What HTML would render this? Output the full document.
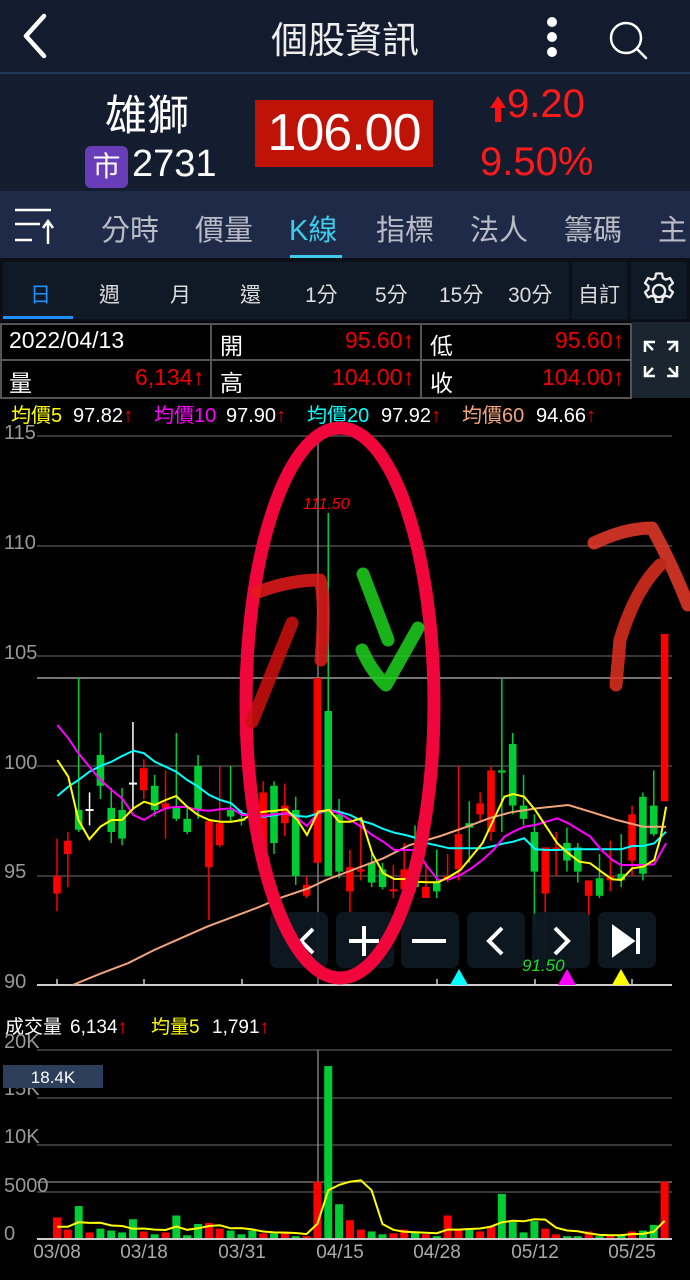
<!DOCTYPE html>
<html><head><meta charset="utf-8">
<style>
*{margin:0;padding:0;box-sizing:border-box}
body{width:690px;height:1280px;background:#000;font-family:"Liberation Sans","Noto Sans CJK TC",sans-serif;position:relative;overflow:hidden;color:#fff}
.a{position:absolute;white-space:nowrap}
.r{color:#e00}
.lg span{display:inline-block}
</style></head><body>
<!-- header -->
<div class="a" style="left:0;top:0;width:690px;height:72px;background:#131c2e"></div>
<svg class="a" style="left:0;top:0" width="690" height="72">
<path d="M44 16 L26 36 L44 56" stroke="#fff" stroke-width="4.5" fill="none" stroke-linecap="round" stroke-linejoin="round"/>
<circle cx="552" cy="22" r="5" fill="#fff"/><circle cx="552" cy="37" r="5" fill="#fff"/><circle cx="552" cy="52" r="5" fill="#fff"/>
<circle cx="626" cy="38" r="15" stroke="#fff" stroke-width="2.5" fill="none"/>
<path d="M637 49 L646 58" stroke="#fff" stroke-width="2.5" stroke-linecap="round"/>
</svg>
<div class="a" style="left:0;width:690px;top:10px;text-align:center;font-size:37px;color:#eee">個股資訊</div>
<div class="a" style="left:0;top:72px;width:690px;height:2px;background:#1d3a58"></div>
<div class="a" style="left:0;top:74px;width:690px;height:117px;background:#141d30"></div>
<div class="a" style="left:105px;top:82px;font-size:42px;color:#fff">雄獅</div>
<div class="a" style="left:85px;top:146px;width:43px;height:42px;background:#6a3db8;border-radius:6px;font-size:28px;text-align:center;line-height:42px">市</div>
<div class="a" style="left:132px;top:143px;font-size:38px">2731</div>
<div class="a" style="left:255px;top:100px;width:178px;height:67px;background:#bf1308"></div>
<div class="a" style="left:255px;top:103px;width:178px;text-align:center;font-size:52px;letter-spacing:-1px">106.00</div>
<svg class="a" style="left:488px;top:94px" width="20" height="30"><path d="M10 2 L18 14 L13 14 L13 28 L7 28 L7 14 L2 14Z" fill="#ff1010"/></svg>
<div class="a" style="left:507px;top:82px;font-size:40px;color:#ff1a1a">9.20</div>
<div class="a" style="left:480px;top:140px;font-size:40px;color:#ff1a1a">9.50%</div>
<!-- tabs -->
<div class="a" style="left:0;top:191px;width:690px;height:67px;background:#1e2a47"></div>
<svg class="a" style="left:0;top:190px" width="60" height="70"><path d="M15 20H51M15 34H40M15 50H32" stroke="#fff" stroke-width="2.5"/><path d="M48 54V32M43 38L48 31L53 38" stroke="#fff" stroke-width="2.5" fill="none"/></svg>
<div class="a" style="left:101px;top:207px;font-size:29px;color:#b9bcc6">分時</div>
<div class="a" style="left:195px;top:207px;font-size:29px;color:#b9bcc6">價量</div>
<div class="a" style="left:289px;top:207px;font-size:29px;color:#3fcbe9">K線</div>
<div class="a" style="left:376px;top:207px;font-size:29px;color:#b9bcc6">指標</div>
<div class="a" style="left:470px;top:207px;font-size:29px;color:#b9bcc6">法人</div>
<div class="a" style="left:564px;top:207px;font-size:29px;color:#b9bcc6">籌碼</div>
<div class="a" style="left:658px;top:207px;font-size:29px;color:#b9bcc6">主</div>
<div class="a" style="left:290px;top:255px;width:52px;height:3px;background:#3fcbe9"></div>
<div class="a" style="left:0;top:258px;width:690px;height:64px;background:#0b1018"></div>
<div class="a" style="left:3px;top:262px;width:566px;height:57px;background:#101a27"></div>
<div class="a" style="left:572px;top:262px;width:55px;height:57px;background:#101a27"></div>
<div class="a" style="left:631px;top:262px;width:56px;height:57px;background:#101a27"></div>
<div class="a" style="left:3px;top:316px;width:70px;height:3px;background:#1e90ff"></div>
<div class="a" style="left:30px;top:279px;font-size:21px;color:#1e90ff">日</div>
<div class="a" style="left:99px;top:279px;font-size:21px;color:#ddd">週</div>
<div class="a" style="left:170px;top:279px;font-size:21px;color:#ddd">月</div>
<div class="a" style="left:240px;top:279px;font-size:21px;color:#ddd">還</div>
<div class="a" style="left:305px;top:279px;font-size:21px;color:#ddd">1分</div>
<div class="a" style="left:375px;top:279px;font-size:21px;color:#ddd">5分</div>
<div class="a" style="left:439px;top:279px;font-size:21px;color:#ddd">15分</div>
<div class="a" style="left:508px;top:279px;font-size:21px;color:#ddd">30分</div>
<div class="a" style="left:578px;top:279px;font-size:21px;color:#ddd">自訂</div>
<svg class="a" style="left:638px;top:270px" width="42" height="42" viewBox="0 0 24 24"><path d="M12 8.5a3.5 3.5 0 1 0 0 7a3.5 3.5 0 1 0 0-7z M10.3 2h3.4l.5 2.6 1.6.9 2.5-.9 1.7 2.9-2 1.7v1.8l2 1.7-1.7 2.9-2.5-.9-1.6.9-.5 2.6h-3.4l-.5-2.6-1.6-.9-2.5.9-1.7-2.9 2-1.7v-1.8l-2-1.7 1.7-2.9 2.5.9 1.6-.9z" fill="none" stroke="#eee" stroke-width="1.3" stroke-linejoin="round"/></svg>
<!-- info table -->
<div class="a" style="left:632px;top:322px;width:58px;height:76px;background:#1b2530"></div>
<svg class="a" style="left:0;top:322px" width="690" height="80">
<g fill="none" stroke="#555" stroke-width="2"><rect x="1" y="2" width="630" height="74"/><path d="M1 38H631M211 2V76M421 2V76"/></g>
<g stroke="#fff" stroke-width="2.5" fill="none"><path d="M645 30V20H655M645 20L653 28M677 30V20H667M677 20L669 28M645 44V54H655M645 54L653 46M677 44V54H667M677 54L669 46"/></g>
</svg>
<div class="a" style="left:9px;top:327px;font-size:23px">2022/04/13</div>
<div class="a" style="left:220px;top:327px;font-size:23px">開</div>
<div class="a" style="left:290px;top:327px;width:124px;text-align:right;font-size:23px;color:#e00">95.60↑</div>
<div class="a" style="left:430px;top:327px;font-size:23px">低</div>
<div class="a" style="left:500px;top:327px;width:124px;text-align:right;font-size:23px;color:#e00">95.60↑</div>
<div class="a" style="left:9px;top:364px;font-size:23px">量</div>
<div class="a" style="left:80px;top:364px;width:124px;text-align:right;font-size:23px;color:#e00">6,134↑</div>
<div class="a" style="left:220px;top:364px;font-size:23px">高</div>
<div class="a" style="left:280px;top:364px;width:134px;text-align:right;font-size:23px;color:#e00">104.00↑</div>
<div class="a" style="left:430px;top:364px;font-size:23px">收</div>
<div class="a" style="left:490px;top:364px;width:134px;text-align:right;font-size:23px;color:#e00">104.00↑</div>
<!-- legend -->
<div class="a lg" style="left:11px;top:399px;font-size:20px"><span style="width:62px;color:#ff0">均價5</span><span style="width:81px">97.82<span class="r">↑</span></span><span style="width:72px;color:#f0f">均價10</span><span style="width:81px">97.90<span class="r">↑</span></span><span style="width:74px;color:#0ff">均價20</span><span style="width:81px">97.92<span class="r">↑</span></span><span style="width:74px;color:#f4a47c">均價60</span><span>94.66<span class="r">↑</span></span></div>
<div class="a lg" style="left:5px;top:1012px;font-size:19px"><span style="width:65px">成交量</span><span style="width:81px">6,134<span class="r">↑</span></span><span style="width:61px;color:#ff0">均量5</span><span>1,791<span class="r">↑</span></span></div>
<svg id="ch" class="a" style="left:0;top:0" width="690" height="1280"></svg>
<script>
var C=[[94.2,95,96.7,93.4],[96,96.6,97,94.5],[98,97.1,104,97],[98,98,98.8,97.3,1],[100.5,99.1,101.5,98.5],[98.1,97,99,96.5],[98,96.7,99,96.4],[99.2,99.2,102,98,1],[98.9,99.9,100.3,98.5],[99.1,98,99.6,97.7],[98.1,98.3,99.8,96.7],[98.1,97.6,101.5,97.5],[97.6,97,98.1,96.9],[100,98,100.5,97.6],[95.4,97.5,97.5,93],[96.4,97.4,100,96.3],[98,97.7,100,97.5],[97.6,97.5,98,97.3],[97.7,97.5,98.5,97.3],[96.2,98.8,99.3,96],[99.1,96.5,99.3,96],[97.4,98.2,99.2,96.8],[98,95,98.6,94.6],[94.1,94.6,95,94],[95.6,104,104,95.6],[102.5,95,111.5,95],[97.8,95.2,98.5,94.9],[94.3,95.4,96.2,93.2],[95.2,95.3,97.5,94.8],[95.6,94.7,96,94.5],[95.3,94.5,95.6,94.4],[94.3,94.4,95.5,94],[94.4,95.3,96.5,94.3],[95.3,94.5,97.3,94.3],[94,94.5,95.6,94],[94.7,94.3,96.2,94],[94.9,95,96,94.7],[95.3,96.9,100,94.8],[97.4,97.2,98.4,95.6],[97.8,98.3,98.8,97.5],[97,99.8,100,96.6],[99.8,99.7,104,97],[101,98.2,101.5,97.8],[98.2,97.6,99.6,97.3],[97,95.2,97.8,92.6],[94.2,96.3,96.3,91.5],[96.2,96.3,97,95],[96.5,95.7,97.2,95.2],[96.3,95.2,96.5,94.7],[94.1,94.8,94.8,92.3],[94.9,94.1,96,94],[94.8,95,96.6,94.3],[95.1,94.8,96.9,94.5],[95.7,97.8,98.2,95],[98.6,95.1,98.8,94.8],[98.2,96.9,99.8,96.8],[98.4,106,106,98.4]];
var V=[2.3,1,3.5,.7,1.1,.9,.7,2.1,.8,.5,.7,2.5,.4,1.6,1.7,1.1,.9,.5,.9,.6,.6,.8,.3,.3,6.1,18.4,3.7,2,1,.8,.5,.6,1,.7,.5,.3,2.5,1,1,.8,1.3,4.8,1.8,.7,1.9,1.1,.5,.3,.3,.8,.3,.3,.4,.8,.9,1.5,6.1];
function Y(p){return 766-(p-100)*22}
var s='';
[436,546,656,766,876].forEach(function(y){s+='<line x1="37" x2="672" y1="'+y+'" y2="'+y+'" stroke="#4a4a4a" stroke-width="1.5"/>'});
s+='<line x1="37" x2="672" y1="678" y2="678" stroke="#bbb" stroke-width="1.2"/>';
s+='<line x1="318" x2="318" y1="440" y2="985" stroke="#999" stroke-width="1.2"/>';
s+='<line x1="37" x2="672" y1="985" y2="985" stroke="#ccc" stroke-width="2"/>';
[57,144,242,340,437,535,632].forEach(function(x){s+='<line x1="'+x+'" x2="'+x+'" y1="985" y2="979" stroke="#ccc" stroke-width="1.5"/>'});
[["115",431],["110",541],["105",651],["100",761],["95",870],["90",980]].forEach(function(a){s+='<text x="4" y="'+(a[1]+8)+'" font-size="20" fill="#999" font-family="Liberation Sans">'+a[0]+'</text>'});
C.forEach(function(c,i){var x=57+i*10.85;var col=c[4]?'#fff':(c[1]>c[0]?'#f00':(c[1]<c[0]?'#0c3':'#f00'));
s+='<line x1="'+x+'" x2="'+x+'" y1="'+Y(c[2])+'" y2="'+Y(c[3])+'" stroke="'+col+'" stroke-width="1.5"/>';
var t=Y(Math.max(c[0],c[1])),b=Y(Math.min(c[0],c[1]));if(b-t<2){t-=1;b+=1}
s+='<rect x="'+(x-(c[4]?4:3.8))+'" y="'+t+'" width="'+(c[4]?8:7.6)+'" height="'+(b-t)+'" fill="'+col+'"/>';});
function pl(a,col){var p=[];for(var i=0;i<a.length;i+=2)p.push((a[i]/2.27).toFixed(1)+','+(a[i+1]/3+680).toFixed(1));return '<polyline points="'+p.join(' ')+'" fill="none" stroke="'+col+'" stroke-width="2"/>'}
s+=pl([165,915,230,880,290,850,350,810,410,775,470,740,530,710,590,680,640,652,700,625,740,600,800,570,870,535,930,495,1000,468,1060,440,1110,415,1160,397,1220,385,1290,375,1340,395,1400,420,1460,440,1512,440],'#f4a47c');
s+=pl([130,348,155,320,178,300,203,275,228,258,253,245,277,228,303,212,327,220,351,245,376,260,400,275,425,300,450,320,475,345,500,360,525,370,550,400,575,408,600,410,625,405,650,400,675,408,697,410,722,400,747,390,770,395,795,405,820,422,845,432,870,447,895,458,920,465,945,474,970,490,995,497,1020,505,1045,505,1070,505,1095,505,1120,498,1145,490,1165,485,1190,475,1215,508,1240,510,1265,510,1290,508,1315,508,1340,508,1365,508,1390,508,1410,508,1435,498,1460,498,1485,490,1512,455],'#0ff');
s+=pl([130,135,155,175,178,220,203,260,228,300,253,330,277,355,303,405,327,420,351,400,376,385,400,380,425,382,450,390,475,392,500,388,525,385,550,405,575,405,600,408,625,402,650,400,675,415,697,438,722,398,747,390,770,400,795,420,820,440,845,465,870,485,895,510,920,510,945,510,970,560,995,600,1020,598,1045,585,1070,565,1095,540,1120,510,1145,470,1165,455,1190,440,1215,435,1240,425,1265,415,1290,430,1315,450,1340,470,1365,510,1390,540,1410,555,1435,555,1460,555,1485,553,1512,490],'#f0f');
s+=pl([130,240,155,290,178,420,203,478,228,440,253,420,277,420,303,385,327,365,351,375,376,360,400,348,425,380,450,405,475,420,500,425,525,425,550,420,575,400,600,395,625,392,650,388,675,420,697,465,722,395,747,390,770,425,795,425,820,415,845,520,870,580,895,597,920,597,945,605,970,607,995,607,1020,590,1045,570,1070,530,1095,490,1120,420,1145,350,1165,342,1190,350,1215,390,1240,440,1265,490,1290,520,1315,545,1340,550,1365,575,1390,598,1410,600,1435,565,1460,560,1485,540,1500,470,1512,380],'#ff0');
s+='<text x="303" y="509" font-size="16" font-style="italic" fill="#f00" font-family="Liberation Sans">111.50</text>';
[[270,'M313 929L301 941L313 953'],[336,'M364 926V956M349 941H379'],[401,'M412 941H446'],[467,'M502 928L489 941L502 954'],[532,'M555 928L568 941L555 954'],[598,'M614 928V954L632 941Z M638 928V954']].forEach(function(b){s+='<rect x="'+b[0]+'" y="912" width="58" height="56" rx="7" fill="#0e1822" fill-opacity="0.95"/><path d="'+b[1]+'" stroke="#fff" stroke-width="4" fill="'+(b[0]==598?'#fff':'none')+'" stroke-linejoin="miter"/>'});
s+='<text x="522" y="971" font-size="17" font-style="italic" fill="#2d2" font-family="Liberation Sans">91.50</text>';
s+='<path d="M450 985L459 969L468 985Z" fill="#0ff"/><path d="M558 985L567 969L576 985Z" fill="#f0f"/><path d="M612 985L621 969L630 985Z" fill="#ff0"/>';
s+='<ellipse cx="340" cy="703" rx="94" ry="275" fill="none" stroke="#f0063a" stroke-width="13"/>';
s+='<g fill="none" stroke-linecap="round" stroke-linejoin="round" stroke-width="13" opacity="0.85"><path d="M258 592Q290 580 320 580Q326 600 321 660" stroke="#e51a1a"/><path d="M292 623L252 722" stroke="#d01010"/><path d="M594 543Q625 528 652 528Q670 560 688 605" stroke="#e83a2a"/><path d="M660 565Q635 590 620 640L616 685" stroke="#e03020"/><path d="M363 574L388 640" stroke="#1ed31e"/><path d="M362 650Q372 672 386 685Q400 660 418 628" stroke="#1ed31e"/></g>';
[1050,1098,1145,1192].forEach(function(y){s+='<line x1="37" x2="672" y1="'+y+'" y2="'+y+'" stroke="#4a4a4a" stroke-width="1.5"/>'});
s+='<line x1="37" x2="672" y1="1182" y2="1182" stroke="#888" stroke-width="1.2"/>';
s+='<line x1="318" x2="318" y1="1050" y2="1239" stroke="#999" stroke-width="1.2"/>';
[["20K",1048],["15K",1095],["10K",1143],["5000",1192],["0",1240]].forEach(function(a){s+='<text x="4" y="'+a[1]+'" font-size="20" fill="#999" font-family="Liberation Sans">'+a[0]+'</text>'});
V.forEach(function(v,i){var x=57+i*10.85;var c=C[i];var col=c[4]?(i==3?'#f00':'#0c3'):(c[1]>=c[0]?'#f00':'#0c3');s+='<rect x="'+(x-4)+'" y="'+(1239-v*9.4)+'" width="8" height="'+(v*9.4)+'" fill="'+col+'"/>'});
s+='<line x1="37" x2="672" y1="1239" y2="1239" stroke="#ccc" stroke-width="2"/>';
var ma=[];for(var i=0;i<V.length;i++){var sm=0,n=0;for(var j=Math.max(0,i-4);j<=i;j++){sm+=V[j];n++}ma.push((57+i*10.85).toFixed(1)+','+(1239-sm/5*9.4-(i<4?(5-n)*2:0)).toFixed(1))}
s+='<polyline points="'+ma.join(' ')+'" fill="none" stroke="#ff0" stroke-width="2"/>';
s+='<rect x="3" y="1065" width="100" height="23" fill="#2c3e5a"/><text x="53" y="1083" text-anchor="middle" font-size="17" fill="#fff" font-family="Liberation Sans">18.4K</text>';
[["03/08",57],["03/18",144],["03/31",242],["04/15",340],["04/28",437],["05/12",535],["05/25",632]].forEach(function(a){s+='<text x="'+a[1]+'" y="1258" text-anchor="middle" font-size="19" fill="#aaa" font-family="Liberation Sans">'+a[0]+'</text>'});
document.getElementById('ch').innerHTML=s;
</script>
</body></html>
